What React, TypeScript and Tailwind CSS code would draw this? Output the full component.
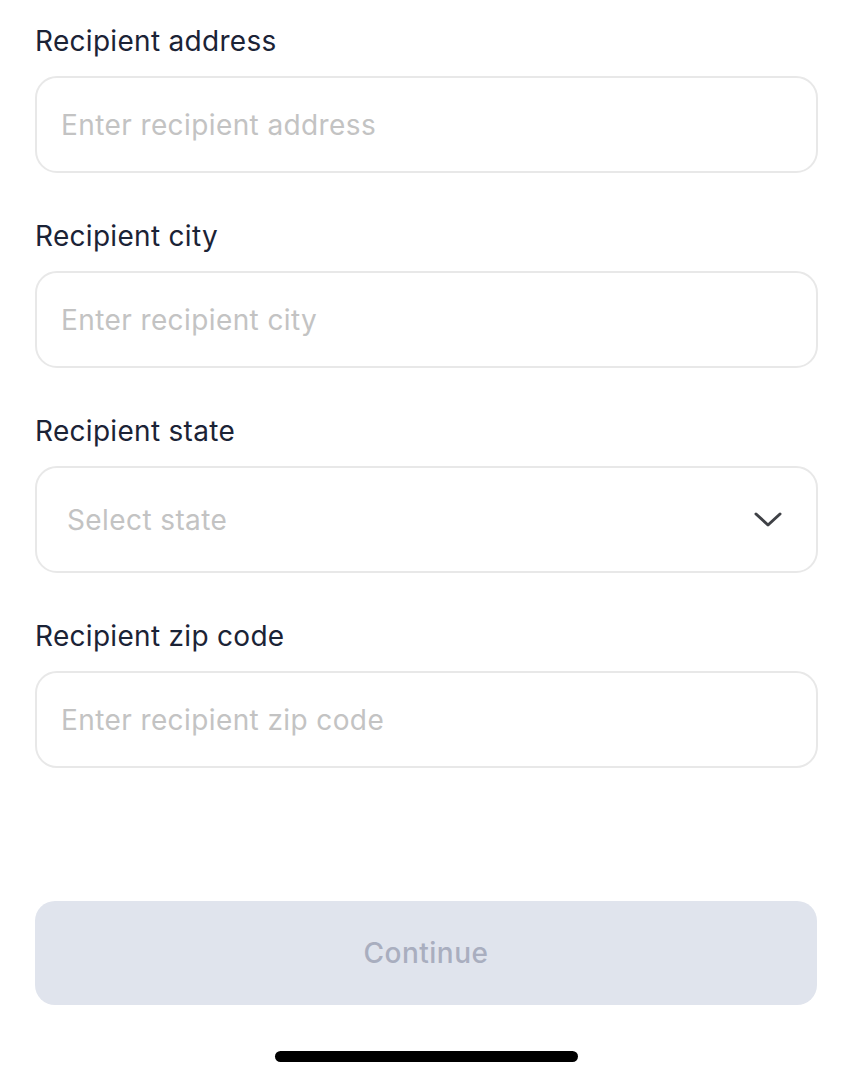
import React from "react";

const fields = [
  { label: "Recipient address", placeholder: "Enter recipient address" },
  { label: "Recipient city", placeholder: "Enter recipient city" },
];

const Label = ({ children }: { children: React.ReactNode }) => (
  <label className="block h-[34px] text-[28px] leading-[34px] text-[#1b2336] tracking-[0.3px]">
    {children}
  </label>
);

const TextField = ({ label, placeholder }: { label: string; placeholder: string }) => (
  <div className="flex flex-col gap-[18px]">
    <Label>{label}</Label>
    <input
      placeholder={placeholder}
      className="h-[97px] w-full rounded-[22px] border-2 border-[#e8e8e8] bg-white px-[24px] text-[28px] tracking-[0.4px] text-[#1b2336] outline-none placeholder:text-[#c3c3c3]"
    />
  </div>
);

export default function App() {
  return (
    <div className="relative h-[1080px] w-[853px] bg-white font-['Inter',sans-serif]">
      <div className="flex flex-col gap-[46px] px-[35px] pt-[24px]">
        {fields.map((f) => (
          <TextField key={f.label} label={f.label} placeholder={f.placeholder} />
        ))}

        <div className="flex flex-col gap-[18px]">
          <Label>Recipient state</Label>
          <button className="flex h-[107px] w-full items-center justify-between rounded-[22px] border-2 border-[#e8e8e8] bg-white pl-[30px] pr-[34px]">
            <span className="text-[28px] tracking-[0.4px] text-[#c3c3c3]">Select state</span>
            <svg width="28" height="16" viewBox="0 0 28 16" fill="none">
              <path d="M2 2l12 11L26 2" stroke="#3f4146" strokeWidth="3" strokeLinecap="round" strokeLinejoin="round" />
            </svg>
          </button>
        </div>

        <TextField label="Recipient zip code" placeholder="Enter recipient zip code" />
      </div>

      <div className="absolute left-[35px] right-[36px] top-[901px]">
        <button className="flex h-[104px] w-full items-center justify-center rounded-[20px] bg-[#e0e4ed] text-[28px] font-medium tracking-[0.5px] text-[#a9aebf]">
          Continue
        </button>
      </div>

      <div className="absolute left-[275px] top-[1051px] h-[11px] w-[303px] rounded-full bg-black" />
    </div>
  );
}
